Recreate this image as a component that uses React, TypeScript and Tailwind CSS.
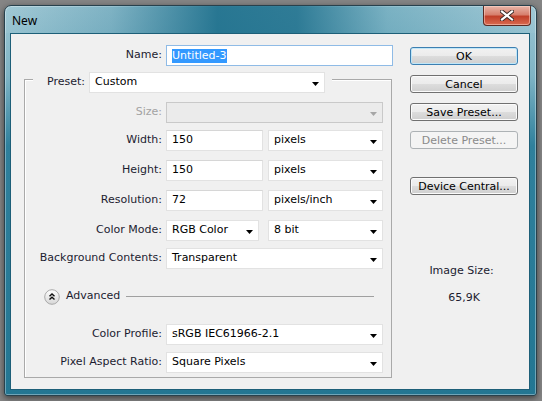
import React from 'react';

function Arrow({ disabled = false }: { disabled?: boolean }) {
  return (
    <svg width="7" height="4" viewBox="0 0 7 4" className="shrink-0 mt-[2px]">
      <path d="M0 0h7L3.5 4z" fill={disabled ? '#a6a6a6' : '#000'} />
    </svg>
  );
}

function Select({ w, value, disabled = false }: { w: string; value?: string; disabled?: boolean }) {
  return (
    <div
      className={`${w} h-[21px] flex items-center justify-between pl-[5px] pr-[5px] border ${
        disabled ? 'border-[#c9c9c9] bg-[#ebebeb]' : 'border-[#e2e2e2] bg-white'
      }`}
    >
      <span className="text-black whitespace-nowrap">{value}</span>
      <Arrow disabled={disabled} />
    </div>
  );
}

function Input({ w, value }: { w: string; value: string }) {
  return (
    <div className={`${w} h-[21px] flex items-center pl-[5px] border border-[#e2e2e2] border-t-[#d6d6d6] bg-white text-black`}>
      {value}
    </div>
  );
}

function Row({ label, mt, disabled = false, children }: { label: string; mt: string; disabled?: boolean; children: React.ReactNode }) {
  return (
    <div className={`flex items-center h-[21px] ${mt}`}>
      <span className={`w-[137px] text-right whitespace-nowrap ${disabled ? 'text-[#a3a3a3]' : 'text-[#1c1c30]'}`}>{label}</span>
      <div className="ml-[4px] flex items-center">{children}</div>
    </div>
  );
}

function Button({ label, mt, primary = false, disabled = false }: { label: string; mt: string; primary?: boolean; disabled?: boolean }) {
  const base = 'w-[108px] h-[18px] flex items-center justify-center rounded-[3px] border leading-none';
  if (disabled) {
    return <div className={`${base} ${mt} border-[#adb2b5] bg-[#f4f4f4] text-[#8a8a8a]`}>{label}</div>;
  }
  return (
    <div
      className={`${base} ${mt} text-black bg-[linear-gradient(to_bottom,#f2f2f2_0%,#ebebeb_50%,#dddddd_50%,#cfcfcf_100%)] ${
        primary ? 'border-[#3c7fb1] shadow-[inset_0_0_0_1px_#bfe6f8]' : 'border-[#707070] shadow-[inset_0_0_0_1px_#fbfbfb]'
      }`}
    >
      {label}
    </div>
  );
}

function AdvancedIcon() {
  return (
    <svg width="16" height="16" viewBox="0 0 16 16" className="shrink-0">
      <defs>
        <linearGradient id="adv" x1="0" y1="0" x2="0" y2="1">
          <stop offset="0" stopColor="#ffffff" />
          <stop offset="1" stopColor="#d6d6d6" />
        </linearGradient>
      </defs>
      <circle cx="8" cy="8" r="7.3" fill="url(#adv)" stroke="#a9a9a9" strokeWidth="1" />
      <path d="M5.5 7.2L8 4.9l2.5 2.3M5.5 10.6L8 8.3l2.5 2.3" fill="none" stroke="#111" strokeWidth="1.4" />
    </svg>
  );
}

export default function App() {
  return (
    <div className="w-[542px] h-[401px] bg-[#858585] pt-[5px] pl-[4px] font-['DejaVu_Sans',sans-serif] text-[11px] overflow-hidden">
      <div className="w-[533px] h-[391px] rounded-t-[7px] rounded-b-[3px] border border-[#27414d] shadow-[0_2px_6px_rgba(0,0,0,0.55),inset_0_0_0_1px_rgba(255,255,255,0.35)] bg-[linear-gradient(to_bottom,#9cc6d3_0px,#7fb4c5_70px,#2f809c_140px,#237692_100%)] flex flex-col relative overflow-hidden">
        <div className="h-[27px] shrink-0 flex items-start justify-between bg-[linear-gradient(to_right,rgba(255,255,255,0.05)_0%,rgba(40,120,150,0.25)_20%,rgba(20,105,135,0.85)_40%,rgba(20,105,135,0.8)_55%,rgba(60,140,165,0.35)_72%,rgba(255,255,255,0.05)_100%)]">
          <span className="ml-[7px] mt-[6px] font-['Noto_Sans',sans-serif] text-[12px] text-black">New</span>
          <div className="mr-[5px] mt-[0px] w-[48px] h-[20px] rounded-b-[4px] border border-t-0 border-[#5b2a22] bg-[linear-gradient(to_bottom,#e8b5a8_0%,#d7806e_45%,#c1402a_55%,#d96a4f_100%)] shadow-[inset_0_0_0_1px_rgba(255,220,210,0.5)] flex items-center justify-center">
            <svg width="14" height="11" viewBox="0 0 14 11">
              <path d="M2 1.5l10 8M12 1.5l-10 8" stroke="#3a2a28" strokeWidth="4" strokeLinecap="square" />
              <path d="M2 1.5l10 8M12 1.5l-10 8" stroke="#ffffff" strokeWidth="2.2" strokeLinecap="square" />
            </svg>
          </div>
        </div>
        <div className="ml-[5px] mr-[6px] mb-[5px] flex-1 border border-[#1d5f78] bg-[#f0f0f0] flex pt-[11px] pl-[13px]">
          <div className="flex flex-col w-[369px]">
            <div className="flex items-center h-[21px]">
              <span className="w-[138px] text-right text-[#1c1c30]">Name:</span>
              <div className="ml-[4px] w-[227px] h-[21px] flex items-center pl-[5px] border border-[#8fbbe6] bg-white">
                <span className="bg-[#3399ff] text-white leading-[14px] pr-[1px]">Untitled-3</span>
              </div>
            </div>
            <div className="mt-[13px] w-[368px] h-[299px] border border-[#a9a9a9] shadow-[inset_1px_1px_0_#fff] flex flex-col">
              <div className="-mt-[8px] ml-[8px] self-start flex items-center bg-[#f0f0f0] pr-[7px] h-[21px]">
                <span className="w-[52px] text-right text-[#1c1c30]">Preset:</span>
                <div className="ml-[4px]">
                  <Select w="w-[236px]" value="Custom" />
                </div>
              </div>
              <Row label="Size:" mt="mt-[9px]" disabled>
                <Select w="w-[217px]" disabled />
              </Row>
              <Row label="Width:" mt="mt-[7px]">
                <Input w="w-[97px]" value="150" />
                <div className="ml-[5px]">
                  <Select w="w-[115px]" value="pixels" />
                </div>
              </Row>
              <Row label="Height:" mt="mt-[9px]">
                <Input w="w-[97px]" value="150" />
                <div className="ml-[5px]">
                  <Select w="w-[115px]" value="pixels" />
                </div>
              </Row>
              <Row label="Resolution:" mt="mt-[9px]">
                <Input w="w-[97px]" value="72" />
                <div className="ml-[5px]">
                  <Select w="w-[115px]" value="pixels/inch" />
                </div>
              </Row>
              <Row label="Color Mode:" mt="mt-[9px]">
                <Select w="w-[93px]" value="RGB Color" />
                <div className="ml-[9px]">
                  <Select w="w-[115px]" value="8 bit" />
                </div>
              </Row>
              <Row label="Background Contents:" mt="mt-[7px]">
                <Select w="w-[217px]" value="Transparent" />
              </Row>
              <div className="mt-[17px] h-[21px] flex items-center ml-[19px] mr-[17px]">
                <AdvancedIcon />
                <span className="ml-[6px] text-[#1c1c30]">Advanced</span>
                <div className="ml-[6px] flex-1 h-px bg-[#a0a0a0]" />
              </div>
              <Row label="Color Profile:" mt="mt-[17px]">
                <Select w="w-[217px]" value="sRGB IEC61966-2.1" />
              </Row>
              <Row label="Pixel Aspect Ratio:" mt="mt-[7px]">
                <Select w="w-[217px]" value="Square Pixels" />
              </Row>
            </div>
          </div>
          <div className="ml-[17px] flex flex-col items-center w-[108px]">
            <Button label="OK" mt="mt-[2px]" primary />
            <Button label="Cancel" mt="mt-[10px]" />
            <Button label="Save Preset..." mt="mt-[10px]" />
            <Button label="Delete Preset..." mt="mt-[10px]" disabled />
            <Button label="Device Central..." mt="mt-[28px]" />
            <span className="mt-[68px] text-[#1c1c30] -ml-[5px]">Image Size:</span>
            <span className="mt-[10px] text-[#1c1c30]">65,9K</span>
          </div>
        </div>
      </div>
    </div>
  );
}
